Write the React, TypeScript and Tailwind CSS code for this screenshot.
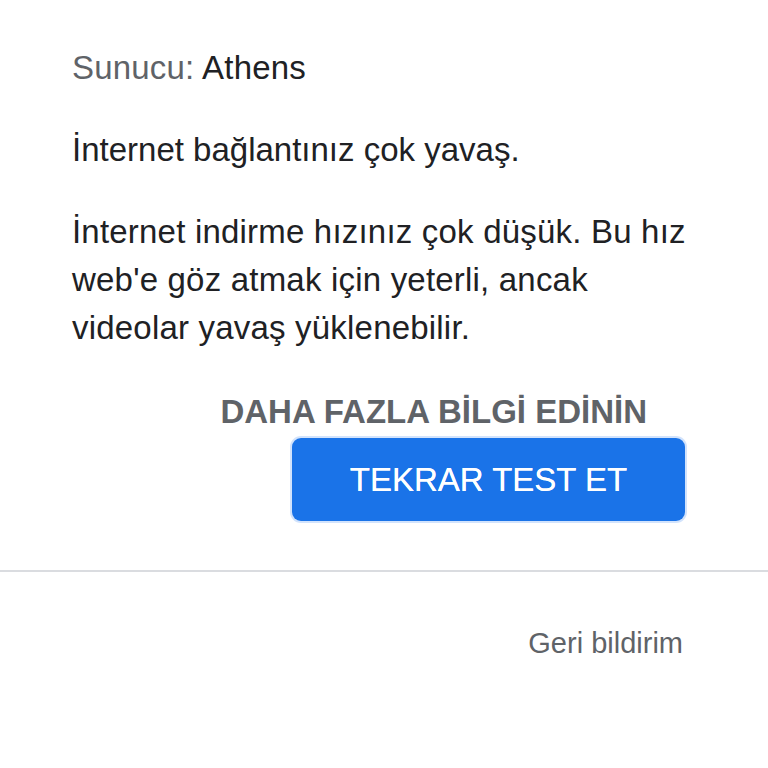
export default function App() {
  return (
    <div className="min-h-[768px] bg-white font-['Liberation_Sans',Arial,sans-serif]">
      <div className="px-[72px] pt-[48px]">
        <p className="text-[33px] leading-[40px] tracking-[0.2px] text-[#202124]">
          <span className="text-[#5f6368]">Sunucu: </span>Athens
        </p>
        <p className="mt-[42px] text-[33px] leading-[40px] text-[#202124]">
          İnternet bağlantınız çok yavaş.
        </p>
        <p className="mt-[38px] text-[33px] leading-[48px] tracking-[0.2px] text-[#202124]">
          İnternet indirme hızınız çok düşük. Bu hız web'e göz atmak için yeterli, ancak videolar yavaş yüklenebilir.
        </p>
      </div>
      <div className="flex flex-col items-end pr-[83px] pt-[42px]">
        <button className="mr-[38px] text-[33px] font-bold leading-[36px] text-[#5f6368]">
          DAHA FAZLA BİLGİ EDİNİN
        </button>
        <button className="mt-[8px] flex h-[83px] w-[393px] items-center justify-center rounded-[9px] bg-[#1a73e8] text-[33px] text-white shadow-[0_0_0_2px_#d2e3fc] [text-shadow:0_0_0.6px_#fff]">
          TEKRAR TEST ET
        </button>
      </div>
      <div className="mt-[49px] h-[2px] bg-[#dadce0]" />
      <div className="flex justify-end pr-[85px] pt-[54px]">
        <button className="text-[29px] leading-[34px] text-[#5f6368]">Geri bildirim</button>
      </div>
    </div>
  )
}
